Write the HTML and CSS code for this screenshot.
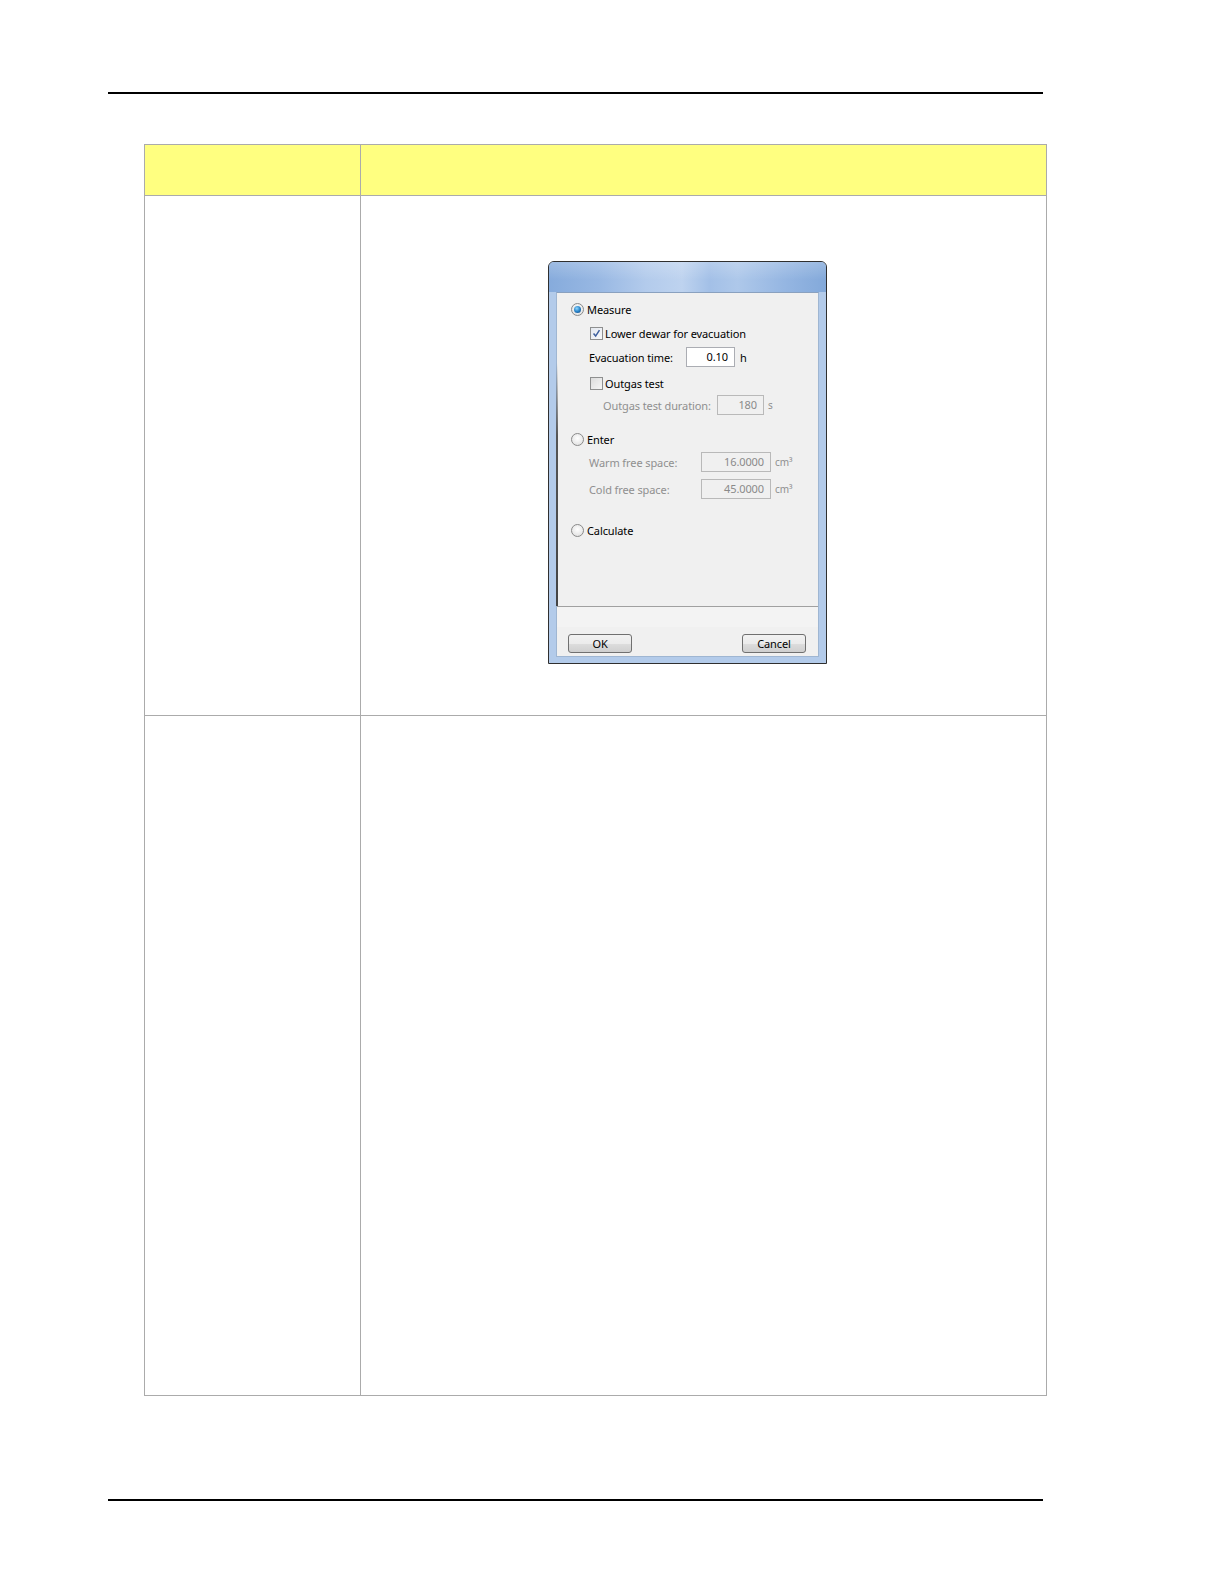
FILE: index.html
```html
<!DOCTYPE html>
<html>
<head>
<meta charset="utf-8">
<link rel="stylesheet" href="styles.css">
</head>
<body>
<div class="page">
  <div class="rule rule-top"></div>
  <table class="grid">
    <colgroup><col class="c1"><col class="c2"></colgroup>
    <tr class="head"><td></td><td></td></tr>
    <tr class="row1">
      <td></td>
      <td>
        <div class="dialog">
          <div class="titlebar"></div>
          <div class="frame">
            <div class="content">
              <div class="line r-measure">
                <span class="radio on"></span><span class="lbl">Measure</span>
              </div>
              <div class="line r-dewar ind1">
                <span class="check on"><svg viewBox="0 0 13 13" width="13" height="13"><path d="M3 6.5 L5.5 9.5 L10 2.5" fill="none" stroke="#3d5f9e" stroke-width="1.8"/></svg></span><span class="lbl">Lower dewar for evacuation</span>
              </div>
              <div class="line r-evac ind1">
                <span class="lbl fl w-evac">Evacuation time:</span><span class="field f-evac">0.10</span><span class="unit">h</span>
              </div>
              <div class="line r-outgas ind1">
                <span class="check"></span><span class="lbl">Outgas test</span>
              </div>
              <div class="line r-dur ind2 dis">
                <span class="lbl fl w-dur">Outgas test duration:</span><span class="field f-dur">180</span><span class="unit">s</span>
              </div>
              <div class="line r-enter">
                <span class="radio"></span><span class="lbl">Enter</span>
              </div>
              <div class="line r-warm ind1 dis">
                <span class="lbl fl w-space">Warm free space:</span><span class="field f-space">16.0000</span><span class="unit">cm³</span>
              </div>
              <div class="line r-cold ind1 dis">
                <span class="lbl fl w-space">Cold free space:</span><span class="field f-space">45.0000</span><span class="unit">cm³</span>
              </div>
              <div class="line r-calc">
                <span class="radio"></span><span class="lbl">Calculate</span>
              </div>
            </div>
            <div class="footer">
              <span class="btn">OK</span>
              <span class="btn">Cancel</span>
            </div>
          </div>
        </div>
      </td>
    </tr>
    <tr class="row2"><td></td><td></td></tr>
  </table>
  <div class="rule rule-bottom"></div>
</div>
</body>
</html>
```

FILE: styles.css
```css
html, body {
  margin: 0;
  padding: 0;
  background: #ffffff;
}
.page {
  width: 1224px;
  height: 1584px;
  padding-top: 92px;
  box-sizing: border-box;
  font-family: "Noto Sans", "Open Sans", sans-serif;
}
.rule {
  margin-left: 108px;
  width: 935px;
  height: 2px;
  background: #000;
}
.grid {
  margin-top: 50px;
  margin-left: 144px;
  border-collapse: collapse;
  table-layout: fixed;
  width: 902px;
}
.grid td {
  border: 1px solid #ababab;
  padding: 0;
  vertical-align: top;
}
.c1 { width: 216px; }
.c2 { width: 686px; }
.head td {
  height: 50px;
  background: #ffff80;
}
.row1 td { height: 519px; }
.row2 td { height: 679px; }
.rule-bottom { margin-top: 103px; }

/* dialog */
.dialog {
  margin-top: 65px;
  margin-left: 187px;
  width: 279px;
  height: 403px;
  box-sizing: border-box;
  border: 1px solid #2f2f2f;
  border-radius: 6px 6px 0 0;
  background: #b3cbea;
  display: flex;
  flex-direction: column;
  overflow: hidden;
  font-size: 11px;
  letter-spacing: -0.1px;
  color: #000;
}
.titlebar {
  height: 30px;
  flex: none;
  background:
    linear-gradient(180deg, rgba(255,255,255,0.2) 0%, rgba(255,255,255,0) 60%),
    linear-gradient(90deg, #86abdc 0%, #98b8e3 18%, #b3cbec 35%, #bed3ef 48%, #a3c0e7 58%, #aec8ea 68%, #95b6e2 85%, #83a9da 100%);
}
.frame {
  flex: 1;
  margin: 0 7px 6px 7px;
  display: flex;
  flex-direction: column;
  background: #f0f0f0;
  border: 1px solid #9fb6d2;
  border-top-color: #8aa1bf;
}
.content {
  position: relative;
  height: 314px;
  box-sizing: border-box;
  padding-top: 6px;
  border-bottom: 1px solid #a0a0a0;
  display: flex;
  flex-direction: column;
}
.content::before {
  content: "";
  position: absolute;
  left: -1px;
  top: 70px;
  bottom: 0;
  width: 2px;
  background: linear-gradient(180deg, rgba(80,80,80,0) 0%, #555 30%, #444 100%);
}
.line {
  height: 20px;
  display: flex;
  align-items: center;
  padding-left: 14px;
  white-space: nowrap;
}
.ind1 { padding-left: 32px; }
.ind2 { padding-left: 46px; }
.r-dewar { margin-top: 4px; }
.r-dewar { padding-left: 33px; }
.r-evac { margin-top: 4px; }
.r-outgas { margin-top: 6px; padding-left: 33px; }
.r-dur { margin-top: 2px; }
.r-enter { margin-top: 14px; }
.r-warm { margin-top: 3px; }
.r-cold { margin-top: 7px; }
.r-calc { margin-top: 21px; }

.dis { color: #8f8f8f; }

.radio {
  width: 11px;
  height: 11px;
  border-radius: 50%;
  border: 1px solid #8a8a8a;
  background: radial-gradient(circle at 50% 40%, #ffffff 0%, #e6e6e6 70%, #d4d4d4 100%);
  margin-right: 3px;
  flex: none;
  position: relative;
}
.radio.on::after {
  content: "";
  position: absolute;
  left: 2px;
  top: 2px;
  width: 7px;
  height: 7px;
  border-radius: 50%;
  background: radial-gradient(circle at 40% 35%, #8fd6ff 0%, #2a85c9 50%, #0d3f7a 100%);
}
.check {
  width: 11px;
  height: 11px;
  border: 1px solid #8e8f8f;
  background: linear-gradient(135deg, #dcdcdc 0%, #f6f6f6 100%);
  margin-right: 2px;
  flex: none;
  display: flex;
  align-items: center;
  justify-content: center;
}
.check svg { width: 11px; height: 11px; }
.check.on { background: linear-gradient(135deg, #e4e8ef 0%, #f8f9fb 100%); }
.lbl { display: inline-block; }
.fl { flex: none; }
.w-evac { width: 97px; }
.w-dur { width: 114px; }
.w-space { width: 112px; }
.field {
  box-sizing: border-box;
  height: 20px;
  border: 1px solid #abadb3;
  background: #ffffff;
  text-align: right;
  padding-right: 6px;
  line-height: 18px;
  flex: none;
}
.dis .field {
  background: #f0f0f0;
  border-color: #b9b9b9;
  color: #8a8a8a;
}
.f-evac { width: 49px; color: #000; }
.f-dur { width: 47px; }
.f-space { width: 70px; }
.unit { margin-left: 5px; }
.dis .unit { margin-left: 4px; font-size: 10px; }

.footer {
  flex: 1;
  display: flex;
  justify-content: space-between;
  align-items: flex-end;
  padding: 0 12px 3px 11px;
  background: linear-gradient(180deg, #f3f3f3 0%, #f3f3f3 40%, #f0f0f0 41%);
}
.btn {
  box-sizing: border-box;
  width: 64px;
  height: 19px;
  border: 1px solid #707070;
  border-radius: 3px;
  background: linear-gradient(180deg, #f2f2f2 0%, #ebebeb 50%, #dddddd 51%, #cfcfcf 100%);
  text-align: center;
  line-height: 17px;
  font-size: 11px;
}
```
